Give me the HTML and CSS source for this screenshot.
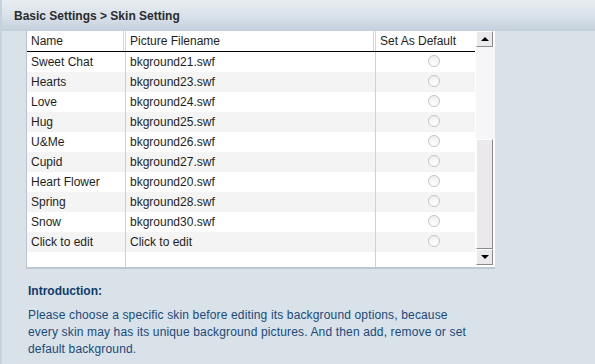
FILE: index.html
```html
<!DOCTYPE html>
<html lang="en">
<head>
  <meta charset="UTF-8" />
  <title>Skin Setting</title>
  <link rel="stylesheet" href="styles.css">
</head>
<body>
  <div class="page">
    <div class="title-bar">Basic Settings &gt; Skin Setting</div>

    <div class="grid-wrap">
      <div class="grid">
        <div class="grid-head">
          <div class="col c-name">Name</div>
          <div class="col c-file">Picture Filename</div>
          <div class="col c-def">Set As Default</div>
        </div>
        <div class="grid-body">
          <div class="row"><div class="col c-name">Sweet Chat</div><div class="col c-file">bkground21.swf</div><div class="col c-def"><span class="radio"></span></div></div>
          <div class="row"><div class="col c-name">Hearts</div><div class="col c-file">bkground23.swf</div><div class="col c-def"><span class="radio"></span></div></div>
          <div class="row"><div class="col c-name">Love</div><div class="col c-file">bkground24.swf</div><div class="col c-def"><span class="radio"></span></div></div>
          <div class="row"><div class="col c-name">Hug</div><div class="col c-file">bkground25.swf</div><div class="col c-def"><span class="radio"></span></div></div>
          <div class="row"><div class="col c-name">U&amp;Me</div><div class="col c-file">bkground26.swf</div><div class="col c-def"><span class="radio"></span></div></div>
          <div class="row"><div class="col c-name">Cupid</div><div class="col c-file">bkground27.swf</div><div class="col c-def"><span class="radio"></span></div></div>
          <div class="row"><div class="col c-name">Heart Flower</div><div class="col c-file">bkground20.swf</div><div class="col c-def"><span class="radio"></span></div></div>
          <div class="row"><div class="col c-name">Spring</div><div class="col c-file">bkground28.swf</div><div class="col c-def"><span class="radio"></span></div></div>
          <div class="row"><div class="col c-name">Snow</div><div class="col c-file">bkground30.swf</div><div class="col c-def"><span class="radio"></span></div></div>
          <div class="row"><div class="col c-name">Click to edit</div><div class="col c-file">Click to edit</div><div class="col c-def"><span class="radio"></span></div></div>
          <div class="row filler"><div class="col c-name"></div><div class="col c-file"></div><div class="col c-def"></div></div>
        </div>
      </div>
      <div class="scrollbar">
        <div class="sb-btn"><span class="arrow up"></span></div>
        <div class="sb-track"></div>
        <div class="sb-thumb"></div>
        <div class="sb-btn"><span class="arrow down"></span></div>
      </div>
    </div>

    <div class="intro">
      <h3>Introduction:</h3>
      <p>Please choose a specific skin before editing its background options, because every skin may has its unique background pictures. And then add, remove or set default background.</p>
    </div>
  </div>
</body>
</html>
```

FILE: styles.css
```css
body {
  margin: 0;
  font-family: "Liberation Sans", Arial, sans-serif;
  font-size: 12px;
  background: #d9e1e9;
}
.page {
  width: 595px;
  height: 364px;
  overflow: hidden;
  border-left: 2px solid #c5d1dd;
  box-sizing: border-box;
}
.title-bar {
  height: 31px;
  box-sizing: border-box;
  padding: 9px 0 0 12px;
  font-weight: bold;
  color: #2b2b2b;
  background: linear-gradient(#e8edf2, #d6dfe8 60%, #c3cfdb);
}
.grid-wrap {
  display: flex;
  margin-left: 24px;
  width: 468px;
  border-left: 1px solid #b8c4d0;
  border-bottom: 2px solid #bcc8d4;
  background: #fff;
}
.grid {
  width: 448px;
}
.grid-head {
  display: flex;
  height: 20px;
  border-bottom: 1px solid #000;
  background: #fff;
}
.grid-head .col {
  border-right: 3px double #d4d8dc;
}
.col {
  box-sizing: border-box;
  padding-left: 4px;
  line-height: 20px;
  color: #1e1e1e;
  white-space: nowrap;
}
.c-name {
  width: 99px;
  border-right: 1px solid #c8d2dc;
}
.c-file {
  width: 250px;
  border-right: 1px solid #c8d2dc;
}
.c-def {
  width: 99px;
}
.grid-head .c-def {
  border-right: none;
}
.row {
  display: flex;
  height: 20px;
}
.row:nth-child(even) {
  background: #f4f4f4;
}
.row.filler {
  height: 15px;
  background: #fff;
}
.row .c-def {
  display: flex;
  justify-content: center;
  align-items: center;
  padding-left: 16px;
}
.radio {
  width: 10px;
  height: 10px;
  border-radius: 50%;
  border: 1px solid #c4c4c4;
  background: linear-gradient(#f0f0f0, #ffffff);
  margin-top: -3px;
}
.scrollbar {
  width: 19px;
  display: flex;
  flex-direction: column;
  background: #fff;
  padding-left: 1px;
}
.sb-btn {
  height: 16px;
  width: 17px;
  background: #ece9ee;
  border-right: 1px solid #8a8a8a;
  border-bottom: 1px solid #8a8a8a;
  border-top: 1px solid #fff;
  border-left: 1px solid #fff;
  box-sizing: border-box;
  display: flex;
  align-items: center;
  justify-content: center;
}
.sb-track {
  height: 92px;
  background: #f6f5f8;
}
.sb-thumb {
  height: 110px;
  width: 17px;
  box-sizing: border-box;
  background: #ece9ee;
  border-right: 1px solid #8a8a8a;
  border-bottom: 1px solid #8a8a8a;
  border-top: 1px solid #fff;
  border-left: 1px solid #fff;
}
.arrow {
  width: 0;
  height: 0;
  border-left: 4px solid transparent;
  border-right: 4px solid transparent;
}
.arrow.up {
  border-bottom: 4px solid #000;
}
.arrow.down {
  border-top: 4px solid #000;
}
.intro {
  padding: 15px 0 0 26px;
  color: #0e3f6e;
}
.intro h3 {
  margin: 0 0 9px 0;
  font-size: 12px;
  font-weight: bold;
  color: #0e3c6a;
}
.intro p {
  margin: 0;
  width: 448px;
  line-height: 17px;
  letter-spacing: 0.15px;
  color: #184a7a;
}
```
